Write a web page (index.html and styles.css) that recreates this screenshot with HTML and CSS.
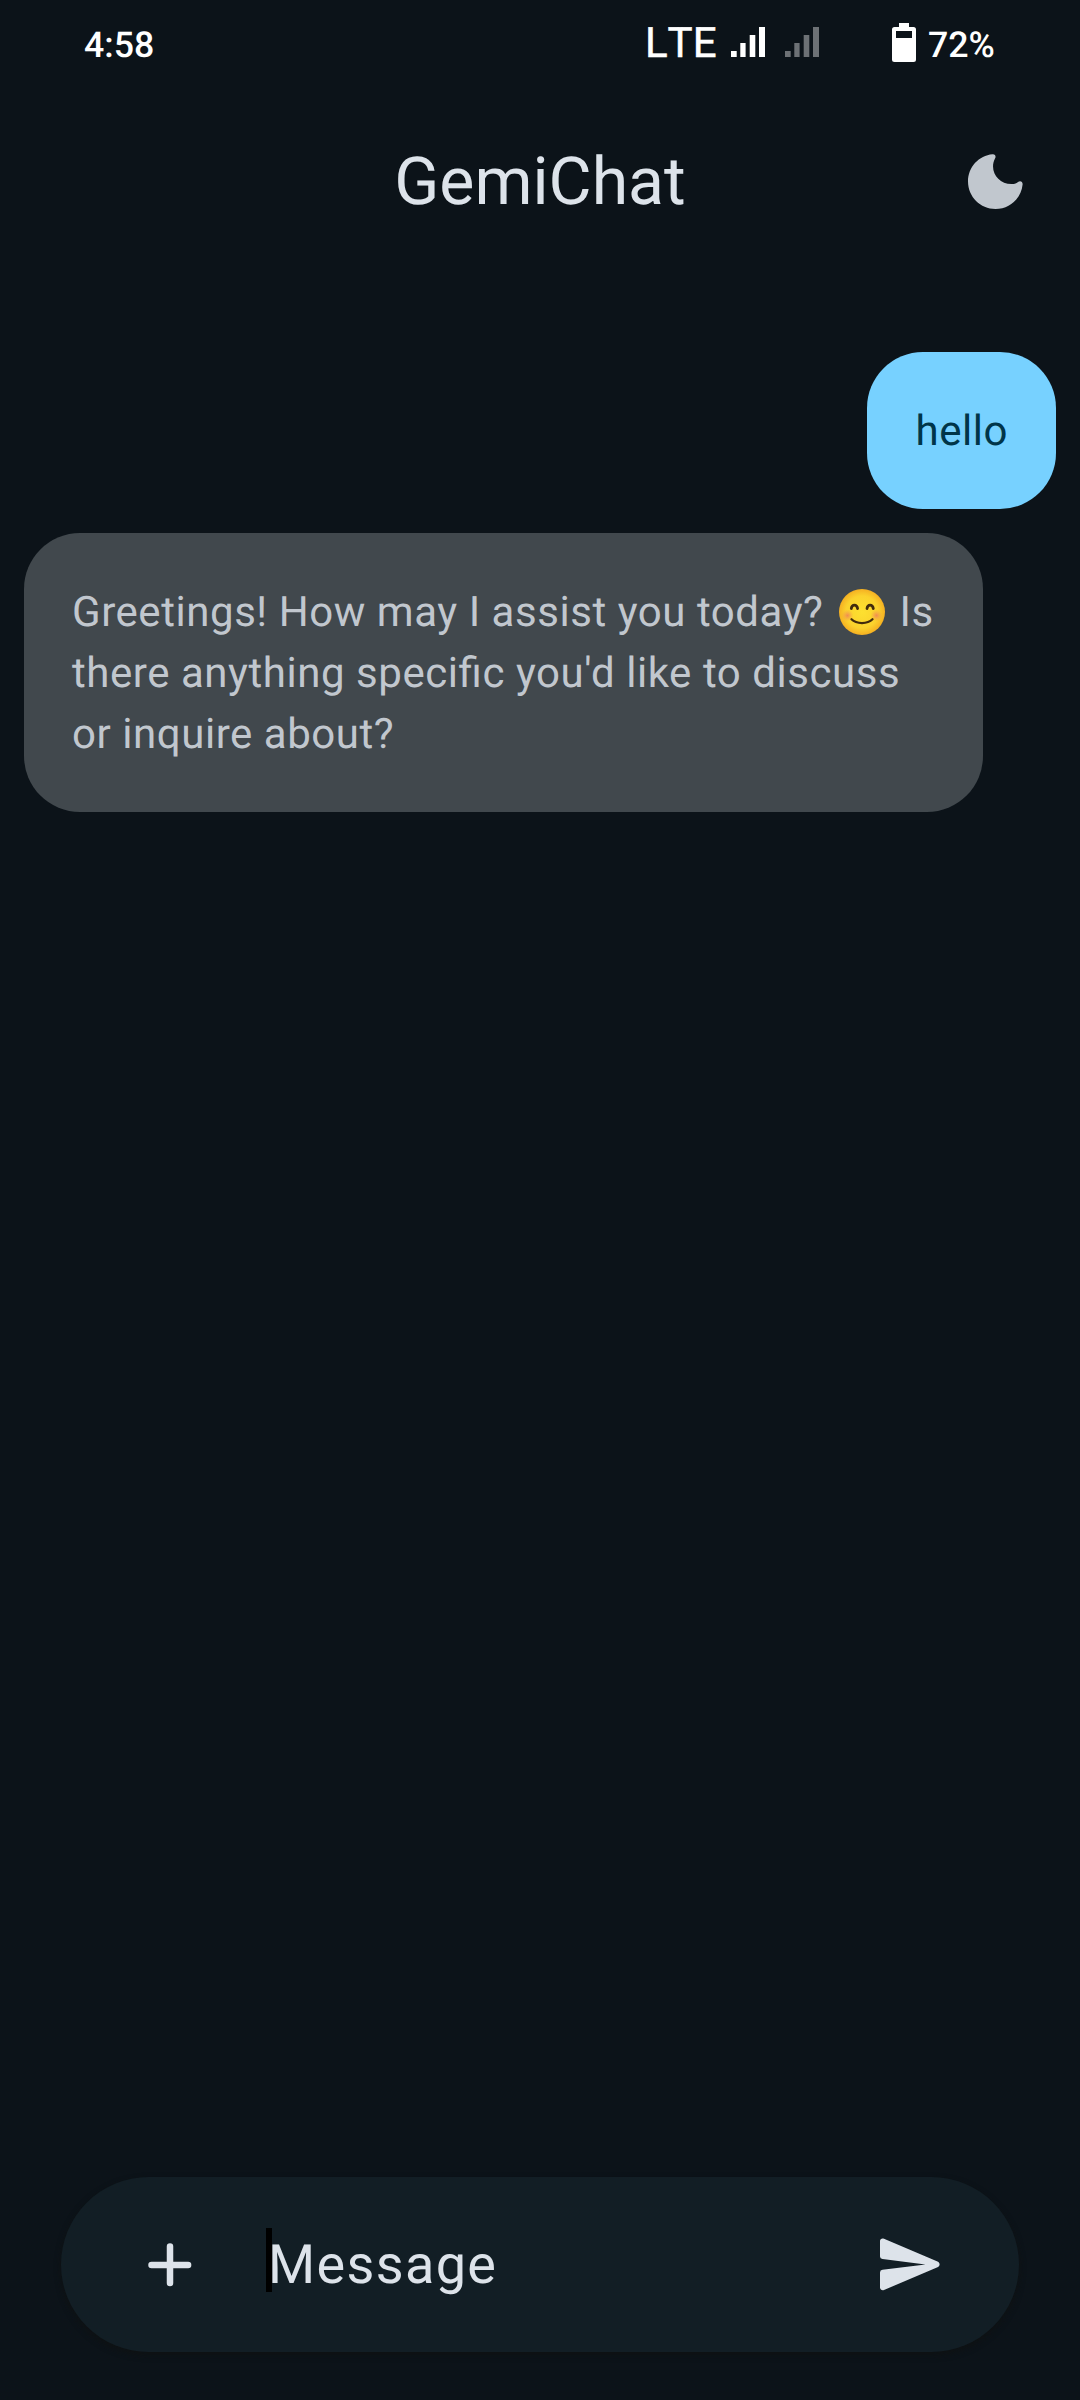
FILE: index.html
```
<!DOCTYPE html>
<html lang="en">
<head>
<meta charset="utf-8">
<title>GemiChat</title>
<link rel="stylesheet" href="styles.css">
</head>
<body>
<div class="screen">
  <div class="status">
    <span class="clock">4:58</span>
    <div class="network">
      <span class="lte">LTE</span>
      <svg class="signal" width="34" height="30" viewBox="0 0 34 30"><path d="M0 24h5.700v6H0zM9.300 16h5.300v14H9.300zM18.700 8h5.600v22h-5.600zM28 0h6v30h-6z"/></svg>
      <svg class="signal dim" width="34" height="30" viewBox="0 0 34 30"><path d="M0 24h5.700v6H0zM9.300 16h5.300v14H9.300zM18.700 8h5.600v22h-5.600zM28 0h6v30h-6z"/></svg>
    </div>
    <svg class="battery" width="24" height="39" viewBox="0 0 24 39"><path fill-rule="evenodd" d="M7 0h10v4h4.500q2.500 0 2.500 2.500v30q0 2.500-2.500 2.500h-19q-2.500 0-2.500-2.500v-30Q0 4 2.500 4H7zM4 8v7h16V8z"/></svg>
    <span class="percent">72%</span>
  </div>
  <header class="topbar">
    <h1 class="title">GemiChat</h1>
    <svg class="moon" width="55" height="55" viewBox="0 0 55 55"><path d="M24.500 .3C27.200 0 28.300 2.300 27 4.500C20.500 17 31 31.500 45.500 30C47.500 29.800 48.800 29 50 28C52.300 26.200 54.900 27.700 54.600 30.500C53.300 44 42 55 27.500 55C12.300 55 0 42.700 0 27.500C0 13 11 1.500 24.500 .3z"/></svg>
  </header>
  <main class="chat">
    <div class="bubble user">hello</div>
    <div class="bubble bot">Greetings! How may I assist you today? <svg class="emoji" width="46" height="46" viewBox="0 0 46 46">
      <defs>
        <radialGradient id="face"><stop offset="0" stop-color="#fde030"/><stop offset=".7" stop-color="#fbd22d"/><stop offset="1" stop-color="#f5b022"/></radialGradient>
        <radialGradient id="cheek"><stop offset="0" stop-color="#ef805a" stop-opacity=".85"/><stop offset="1" stop-color="#f29b4a" stop-opacity="0"/></radialGradient>
      </defs>
      <circle cx="23" cy="23" r="23" fill="url(#face)"/>
      <circle cx="8.500" cy="26.500" r="6" fill="url(#cheek)"/><circle cx="37.500" cy="26.500" r="6" fill="url(#cheek)"/>
      <path class="features" d="M12.300 19.500c.7-4.500 5.500-4.500 6.300 0M28 19.500c.7-4.500 5.500-4.500 6.300 0"/>
      <path class="features smile" d="M12.500 30.300c5 5 16 5 21 0"/>
    </svg> Is<br>there anything specific you'd like to discuss<br>or inquire about?</div>
  </main>
  <div class="composer">
    <svg class="plus" width="44" height="44" viewBox="0 0 44 44"><path d="M22 3.500v36.600M3.500 22h36.600"/></svg>
    <div class="field"><span class="caret"></span><span class="hint">Message</span></div>
    <svg class="send" width="60" height="53" viewBox="0 0 60 53"><path d="M0 3C0 .8 2 0 4 .7L57.500 23.500C60.300 24.800 60.300 28 57.500 29.200L4 52C2 52.800 0 51.500 0 49.500V34.500Q0 32 2.500 31.700L45.500 26.400L2.500 21Q0 20.700 0 18.500z"/></svg>
  </div>
</div>
</body>
</html>
```
FILE: styles.css
```
body { margin: 0; background: #0c1319; font-family: Roboto, sans-serif; text-rendering: geometricPrecision; }
.screen { width: 1080px; height: 2400px; display: flex; flex-direction: column; overflow: hidden; }
svg { display: block; flex: none; }
.status { height: 90px; display: flex; align-items: flex-start; color: #fff; box-sizing: border-box; padding-left: 84px; }
.clock, .percent { font-size: 35.700px; font-weight: 500; line-height: 42px; margin-top: 24px; }
.clock { width: 561px; }
.network { display: flex; width: 247px; }
.lte { font-size: 42px; font-kerning: none; -webkit-text-stroke: .5px #fff; line-height: 48px; margin-top: 20px; width: 86px; }
.signal { fill: #fff; margin-top: 27px; margin-right: 20px; }
.signal.dim { fill: #6d7175; margin-right: 0; }
.battery { fill: #fff; margin-top: 23px; margin-right: 12px; }
.topbar { height: 182px; display: grid; grid-template-columns: 1fr auto 1fr; align-items: center; }
.title { grid-column: 2; margin: 4px 0 0; font-size: 66.200px; font-weight: 400; line-height: 80px; color: #dde3ea; }
.moon { fill: #c1c7ce; justify-self: end; margin-right: 57px; }
.chat { flex: 1; padding: 80px 24px 0; display: flex; flex-direction: column; align-items: flex-start; gap: 24px; }
.bubble { box-sizing: border-box; border-radius: 56px; font-size: 42px; letter-spacing: .550px; line-height: 62px; padding: 49px 48px 46px; white-space: nowrap; font-feature-settings: "liga" 1; }
.user { align-self: flex-end; background: #77d1ff; color: #003549; }
.bot { width: 959px; height: 279px; background: #41484d; color: #c1c7ce; line-height: 61px; }
.emoji { display: inline-block; vertical-align: top; margin: 7px 3px 0 5px; }
.features { fill: none; stroke: #422b0d; stroke-width: 2.800; stroke-linecap: round; }
.smile { stroke-width: 2.300; }
.composer { margin: 0 61px 48px; height: 175px; border-radius: 88px; background: #121e25; display: flex; align-items: center; box-shadow: 0 3px 6px rgba(15, 17, 17, .8); }
.plus { margin-left: 87px; fill: none; stroke: #dde3ea; stroke-width: 6.500; stroke-linecap: round; }
.field { display: flex; align-items: center; margin-left: 74px; flex: 1; }
.caret { width: 6px; height: 64px; background: #000; margin-top: -9px; z-index: 1; }
.hint { color: #dde3ea; font-size: 54px; line-height: 64px; letter-spacing: 1.350px; margin: 2px 0 0 -4px; }
.send { fill: #dde3ea; margin-right: 79px; }
```
